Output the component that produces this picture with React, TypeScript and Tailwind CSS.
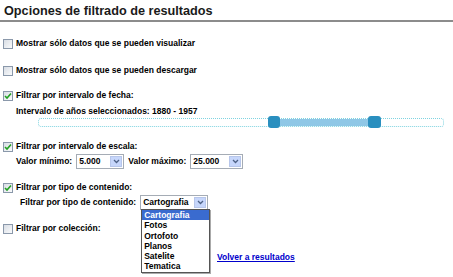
import React from 'react';

const font = { fontFamily: '"Liberation Sans", Arial, sans-serif' };

function Check({ checked }: { checked?: boolean }) {
  return (
    <span className="inline-flex h-[10px] w-[10px] shrink-0 items-center justify-center border border-[#8a98aa] bg-gradient-to-br from-[#d8dde4] to-[#fafbfc]">
      {checked && (
        <svg width="8" height="8" viewBox="0 0 8 8">
          <path d="M1 4 L3 6 L7 1.5" fill="none" stroke="#21a121" strokeWidth="1.6" />
        </svg>
      )}
    </span>
  );
}

function Select({ value, width }: { value: string; width: string }) {
  return (
    <span className={`inline-flex h-[15px] items-center border border-[#a5acb5] bg-white pl-[2px] ${width}`}>
      <span className="flex-1 leading-none">{value}</span>
      <span className="mr-px flex h-[11px] w-[12px] items-center justify-center border border-[#b7c6ea] bg-[#c6d6fb]">
        <svg width="7" height="5" viewBox="0 0 7 5">
          <path d="M1 1 L3.5 3.5 L6 1" fill="none" stroke="#4d6185" strokeWidth="1.3" />
        </svg>
      </span>
    </span>
  );
}

function Row({ checked, label }: { checked?: boolean; label: string }) {
  return (
    <div className="flex h-[11px] items-center gap-[3px] pl-[3px]">
      <Check checked={checked} />
      <span>{label}</span>
    </div>
  );
}

export default function App() {
  const options = ['Cartografia', 'Fotos', 'Ortofoto', 'Planos', 'Satelite', 'Tematica'];
  return (
    <div className="h-[277px] w-[453px] overflow-hidden bg-white text-[8.5px] font-bold leading-[11px] text-black" style={font}>
      <h1 className="pl-[4px] pt-[3px] text-[12.7px] font-bold leading-[16px] text-[#1a1a1a]">Opciones de filtrado de resultados</h1>
      <div className="mt-[1px] h-[2px] bg-[#8c8c8c]" />

      <div className="mt-[16px]">
        <Row label="Mostrar sólo datos que se pueden visualizar" />
      </div>
      <div className="mt-[16px]">
        <Row label="Mostrar sólo datos que se pueden descargar" />
      </div>

      <div className="mt-[14px]">
        <Row checked label="Filtrar por intervalo de fecha:" />
        <div className="mt-[5px] pl-[16px]">Intervalo de años seleccionados: 1880 - 1957</div>
        <div className="relative ml-[38px] mt-[1px] h-[9px] w-[406px] rounded-[3px] border border-dotted border-[#7fd3e0] bg-white">
          <div className="absolute left-[236px] top-[0px] h-[7px] w-[94px] bg-[#8fc7e6]" />
          <div className="absolute left-[229px] top-[-3px] h-[12px] w-[12px] rounded-[3px] bg-[#2a8fbf]" />
          <div className="absolute left-[329px] top-[-3px] h-[12px] w-[13px] rounded-[3px] bg-[#2a8fbf]" />
        </div>
      </div>

      <div className="mt-[14px]">
        <Row checked label="Filtrar por intervalo de escala:" />
        <div className="mt-[2px] flex items-center gap-[4px] pl-[16px]">
          <span>Valor mínimo:</span>
          <Select value="5.000" width="w-[48px]" />
          <span>Valor máximo:</span>
          <Select value="25.000" width="w-[53px]" />
        </div>
      </div>

      <div className="mt-[13px]">
        <Row checked label="Filtrar por tipo de contenido:" />
        <div className="mt-[2px] flex items-center gap-[4px] pl-[20px]">
          <span>Filtrar por tipo de contenido:</span>
          <span className="relative flex">
            <Select value="Cartografia" width="w-[68px]" />
            <div className="absolute left-[1px] top-[14px] z-10 w-[69px] border border-[#555] bg-white leading-[10.3px] shadow-[1px_1px_0_#aaa]">
              {options.map((o, i) => (
                <div key={o} className={i === 0 ? 'bg-[#3a6bcf] px-[2px] text-white' : 'px-[2px]'}>
                  {o}
                </div>
              ))}
            </div>
          </span>
        </div>
      </div>

      <div className="mt-[13px]">
        <Row label="Filtrar por colección:" />
      </div>

      <div className="mt-[18px] pl-[217px]">
        <a href="#" className="text-[#0000cc] underline">Volver a resultados</a>
      </div>
    </div>
  );
}
